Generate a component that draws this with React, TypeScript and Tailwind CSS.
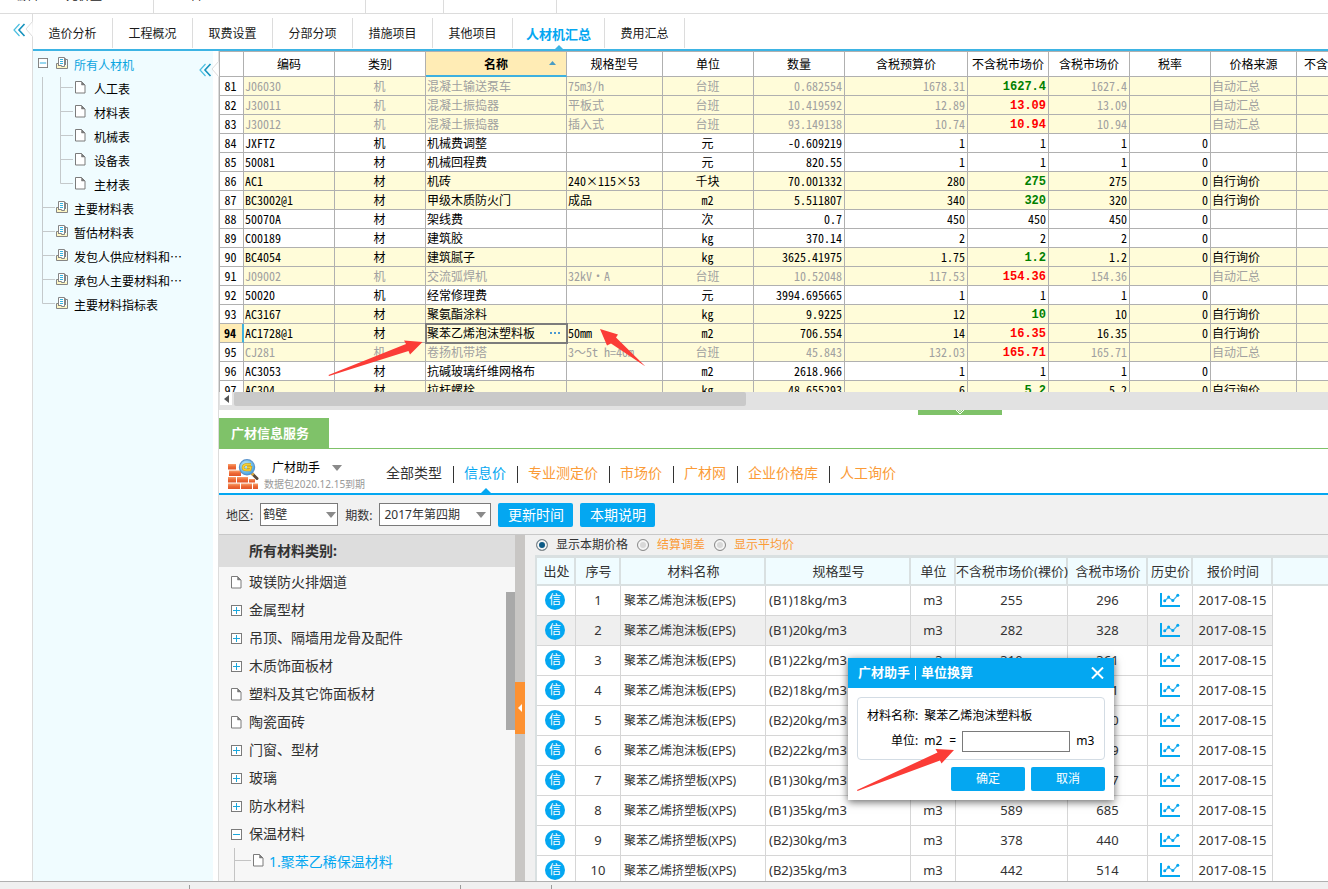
import { useState } from 'react'
import clsx from 'clsx'

const topTabs = ['造价分析', '工程概况', '取费设置', '分部分项', '措施项目', '其他项目', '人材机汇总', '费用汇总']

const sheets = ['人工表', '材料表', '机械表', '设备表', '主材表']
const reports = ['主要材料表', '暂估材料表', '发包人供应材料和⋯', '承包人主要材料和⋯', '主要材料指标表']

type Tone = 'up' | 'down' | ''

interface Item {
  no: number
  code: string
  kind: string
  name: string
  spec: string
  unit: string
  qty: string
  budget: string
  price: string
  tone: Tone
  market: string
  source: '' | '自动汇总' | '自行询价'
}

const row = (
  no: number, code: string, kind: string, name: string, spec: string, unit: string,
  qty: string, budget: string, price: string, tone: Tone, market: string, source: Item['source'],
): Item => ({ no, code, kind, name, spec, unit, qty, budget, price, tone, market, source })

const items: Item[] = [
  row(81, 'J06030', '机', '混凝土输送泵车', '75m3/h', '台班', '0.682554', '1678.31', '1627.4', 'down', '1627.4', '自动汇总'),
  row(82, 'J30011', '机', '混凝土振捣器', '平板式', '台班', '10.419592', '12.89', '13.09', 'up', '13.09', '自动汇总'),
  row(83, 'J30012', '机', '混凝土振捣器', '插入式', '台班', '93.149138', '10.74', '10.94', 'up', '10.94', '自动汇总'),
  row(84, 'JXFTZ', '机', '机械费调整', '', '元', '-0.609219', '1', '1', '', '1', ''),
  row(85, '50081', '材', '机械回程费', '', '元', '820.55', '1', '1', '', '1', ''),
  row(86, 'AC1', '材', '机砖', '240×115×53', '千块', '70.001332', '280', '275', 'down', '275', '自行询价'),
  row(87, 'BC3002@1', '材', '甲级木质防火门', '成品', 'm2', '5.511807', '340', '320', 'down', '320', '自行询价'),
  row(88, '50070A', '材', '架线费', '', '次', '0.7', '450', '450', '', '450', ''),
  row(89, 'C00189', '材', '建筑胶', '', 'kg', '370.14', '2', '2', '', '2', ''),
  row(90, 'BC4054', '材', '建筑腻子', '', 'kg', '3625.41975', '1.75', '1.2', 'down', '1.2', '自行询价'),
  row(91, 'J09002', '机', '交流弧焊机', '32kV·A', '台班', '10.52048', '117.53', '154.36', 'up', '154.36', '自动汇总'),
  row(92, '50020', '机', '经常修理费', '', '元', '3994.695665', '1', '1', '', '1', ''),
  row(93, 'AC3167', '材', '聚氨酯涂料', '', 'kg', '9.9225', '12', '10', 'down', '10', '自行询价'),
  row(94, 'AC1728@1', '材', '聚苯乙烯泡沫塑料板', '50mm', 'm2', '706.554', '14', '16.35', 'up', '16.35', '自行询价'),
  row(95, 'CJ281', '机', '卷扬机带塔', '3～5t h=40m', '台班', '45.843', '132.03', '165.71', 'up', '165.71', '自动汇总'),
  row(96, 'AC3053', '材', '抗碱玻璃纤维网格布', '', 'm2', '2618.966', '1', '1', '', '1', ''),
  row(97, 'AC304', '材', '拉杆螺栓', '', 'kg', '48.655293', '6', '5.2', 'down', '5.2', '自行询价'),
]

const sources = ['全部类型', '信息价', '专业测定价', '市场价', '广材网', '企业价格库', '人工询价']

const categories: [string, 'leaf' | 'closed' | 'open'][] = [
  ['玻镁防火排烟道', 'leaf'],
  ['金属型材', 'closed'],
  ['吊顶、隔墙用龙骨及配件', 'closed'],
  ['木质饰面板材', 'closed'],
  ['塑料及其它饰面板材', 'leaf'],
  ['陶瓷面砖', 'leaf'],
  ['门窗、型材', 'closed'],
  ['玻璃', 'closed'],
  ['防水材料', 'closed'],
  ['保温材料', 'open'],
]

const prices = [
  ['聚苯乙烯泡沫板(EPS)', '(B1)18kg/m3', '255', '296'],
  ['聚苯乙烯泡沫板(EPS)', '(B1)20kg/m3', '282', '328'],
  ['聚苯乙烯泡沫板(EPS)', '(B1)22kg/m3', '310', '361'],
  ['聚苯乙烯泡沫板(EPS)', '(B2)18kg/m3', '207', '241'],
  ['聚苯乙烯泡沫板(EPS)', '(B2)20kg/m3', '232', '270'],
  ['聚苯乙烯泡沫板(EPS)', '(B2)22kg/m3', '257', '299'],
  ['聚苯乙烯挤塑板(XPS)', '(B1)30kg/m3', '513', '597'],
  ['聚苯乙烯挤塑板(XPS)', '(B1)35kg/m3', '589', '685'],
  ['聚苯乙烯挤塑板(XPS)', '(B2)30kg/m3', '378', '440'],
  ['聚苯乙烯挤塑板(XPS)', '(B2)35kg/m3', '442', '514'],
]

function Chevrons() {
  return (
    <svg width="13" height="14" viewBox="0 0 13 14" fill="none">
      <path d="M6.5 1 L1 7 L6.5 13" stroke="#4bbfe0" strokeWidth="1.2" />
      <path d="M11.5 1 L6 7 L11.5 13" stroke="#1592bd" strokeWidth="1.6" />
    </svg>
  )
}

// small fold in a vertical divider, pointing left
function Notch() {
  return (
    <svg width="8" height="18" viewBox="0 0 8 18" fill="none">
      <path d="M8 0 V18 H7 Z" fill="#fff" />
      <path d="M7.5 0.5 L1 9 L7.5 17.5 Z" fill="#fff" />
      <path d="M7.5 0 V1.5 L1 9 L7.5 16.5 V18" stroke="#dcdcdc" />
    </svg>
  )
}

function PageIcon() {
  return (
    <svg width="11" height="13" viewBox="0 0 11 13" className="shrink-0">
      <path d="M0.5 0.5 H6.5 L10 4 V12 H0.5 Z" fill="#fff" stroke="#7b7b7b" />
      <path d="M6.5 0.5 V4 H10 Z" fill="#7b7b7b" stroke="#7b7b7b" strokeWidth="0.5" />
    </svg>
  )
}

function BookIcon() {
  return (
    <svg width="13" height="13" viewBox="0 0 13 13" className="shrink-0" fill="none">
      <path d="M0.5 6.5 H2.5 V8.5 H5.5 V9.5 H9.5 V8.5 H11.5 V11.5 H0.5 Z" fill="#fdf6c3" />
      <path d="M2.5 8 V0.5 H8.5 V8" fill="#fff" stroke="#858585" />
      <path d="M8.5 1.5 H9.5 V8 M9.5 2.5 H11.5 V8" stroke="#858585" />
      <path d="M2.5 6.5 H0.5 V11.5 H11.5 V7" stroke="#858585" />
      <path d="M2 8.500 H5.500 V9.500 H8.500 V8" stroke="#858585" />
      <path d="M4 2.5 H7 M4 4.5 H7 M4 6.5 H7" stroke="#35b3e0" />
    </svg>
  )
}

function Toggle({ open = false, size = 11 }: { open?: boolean; size?: number }) {
  return (
    <svg width={size} height={size} viewBox="0 0 11 11" className="shrink-0" fill="none">
      <rect x="0.5" y="0.5" width="10" height="10" fill="#fff" stroke="#7b7b7b" />
      <path d="M2 5.5 H9" stroke="#1ba7dc" />
      {!open && <path d="M5.5 2 V9" stroke="#1ba7dc" />}
    </svg>
  )
}

function Caret() {
  return (
    <svg width="10" height="6" viewBox="0 0 10 6">
      <path d="M0 0 H10 L5 6 Z" fill="#8a8a8a" />
    </svg>
  )
}

function Trend() {
  return (
    <svg width="20" height="14" viewBox="0 0 20 14" fill="none" className="mx-auto block">
      <path d="M1 0 V13 H20" stroke="#04a7f1" strokeWidth="2" />
      <path d="M4.5 8 L8.5 4.5 L13 7.5 L18 2" stroke="#3fb6ee" strokeWidth="1.3" />
      <circle cx="4.7" cy="7.8" r="1.5" fill="#04a7f1" />
      <circle cx="8.6" cy="3.9" r="1.5" fill="#04a7f1" />
      <circle cx="12.8" cy="7.6" r="1.5" fill="#04a7f1" />
      <circle cx="17.8" cy="2.2" r="1.5" fill="#04a7f1" />
    </svg>
  )
}

function Bricks() {
  return (
    <svg width="32" height="32" viewBox="0 0 32 32">
      <defs>
        <linearGradient id="brick" x1="0" y1="0" x2="0" y2="1">
          <stop offset="0" stopColor="#f9a06c" />
          <stop offset="0.5" stopColor="#ee6a35" />
          <stop offset="1" stopColor="#e0552a" />
        </linearGradient>
        <radialGradient id="lens" cx="0.4" cy="0.35" r="0.7">
          <stop offset="0" stopColor="#c4ecfb" />
          <stop offset="1" stopColor="#3fa0de" />
        </radialGradient>
      </defs>
      <g fill="url(#brick)">
        <rect x="1" y="5" width="8" height="5.500" />
        <rect x="2" y="11.500" width="12" height="5.500" />
        <rect x="1" y="18" width="8" height="5.500" />
        <rect x="10" y="18" width="11" height="5.500" />
        <rect x="22" y="20" width="6" height="3.500" />
        <rect x="1" y="24.500" width="12" height="5.500" />
        <rect x="14" y="24.500" width="11" height="5.500" />
        <rect x="26" y="24.500" width="5" height="5.500" />
      </g>
      <path d="M25 14.500 L30 19.500" stroke="#5b4a3c" strokeWidth="3" strokeLinecap="round" />
      <path d="M24 13.500 L26.500 16" stroke="#e0b040" strokeWidth="2.500" />
      <circle cx="20" cy="8.300" r="7.600" fill="url(#lens)" stroke="#5a93cc" strokeWidth="1.200" />
      <path d="M24 5.500 H19 Q16 6 16 9 Q16.500 11 19.500 11 H23 L23.700 8.300 H20" fill="none" stroke="#c99a14" strokeWidth="2.600" />
      <path d="M24 5.500 H19 Q16 6 16 9 Q16.500 11 19.500 11 H23 L23.700 8.300 H20" fill="none" stroke="#f8d030" strokeWidth="1.400" />
    </svg>
  )
}

function MaterialTree() {
  return (
    <aside className="relative flex w-[186px] shrink-0 border-r border-[#dcdcdc]">
      <ul className="w-[180px] bg-[#f0fcff] pt-[2px] font-['Noto_Sans_CJK_SC',sans-serif] text-xs text-black">
        <li className="flex h-6 items-center text-[#0aa5df]">
          <span className="-mt-1 ml-[5px] mr-2"><Toggle open size={10} /></span>
          <span className="-mt-1"><BookIcon /></span>
          <span className="ml-[5px]">所有人材机</span>
        </li>
        {sheets.map((name, i) => (
          <li key={name} className="flex h-6 items-center">
            <svg width="42" height="24" className="shrink-0" stroke="#c4c9cb" fill="none">
              <path d="M9.5 0 V24 M27.5 10.5 H40" />
              <path d={i === sheets.length - 1 ? 'M27.5 0 V10.5' : 'M27.5 0 V24'} />
            </svg>
            <span className="-mt-1"><PageIcon /></span>
            <span className="ml-2">{name}</span>
          </li>
        ))}
        {reports.map((name, i) => (
          <li key={name} className="flex h-6 items-center">
            <svg width="23" height="24" className="shrink-0" stroke="#c4c9cb" fill="none">
              <path d="M9.5 10.5 H22" />
              <path d={i === reports.length - 1 ? 'M9.5 0 V10.5' : 'M9.5 0 V24'} />
            </svg>
            <span className="-mt-1"><BookIcon /></span>
            <span className="ml-[5px]">{name}</span>
          </li>
        ))}
      </ul>
      <button aria-label="收起" className="absolute right-[6px] top-[12px]"><Chevrons /></button>
      <span className="absolute -right-px top-[9px]"><Notch /></span>
    </aside>
  )
}

const headCell = 'h-[26px] border-b border-r border-t border-[#b0b0b0] p-0 font-normal whitespace-nowrap'

function SummaryGrid() {
  const selected = 94
  return (
    <section className="relative flex min-h-0 flex-[359] flex-col overflow-hidden">
      <div className="min-h-0 flex-1 overflow-hidden">
        <table className="w-[1189px] table-fixed border-separate border-spacing-0 font-['Noto_Sans_Mono_CJK_SC','Noto_Sans_CJK_SC',monospace] text-xs leading-[18px] text-black">
          <colgroup>
            <col className="w-[25px]" />
            <col className="w-[91px]" />
            <col className="w-[91px]" />
            <col className="w-[141px]" />
            <col className="w-[96px]" />
            <col className="w-[91px]" />
            <col className="w-[91px]" />
            <col className="w-[123px]" />
            <col className="w-[81px]" />
            <col className="w-[81px]" />
            <col className="w-[81px]" />
            <col className="w-[86px]" />
            <col className="w-[111px]" />
          </colgroup>
          <thead>
            <tr>
              <th className={clsx(headCell, 'border-l')} />
              <th className={headCell}>编码</th>
              <th className={headCell}>类别</th>
              <th className="relative h-[26px] border-b-2 border-r border-t border-[#b0b0b0] border-b-[#3db1e0] bg-[#ffecb5] p-0 font-bold">
                名称
                <svg width="7" height="4" viewBox="0 0 7 4" className="absolute right-[10px] top-[9px]">
                  <path d="M0 4 L3.500 0 L7 4 Z" fill="#4a9cc4" />
                </svg>
              </th>
              <th className={headCell}>规格型号</th>
              <th className={headCell}>单位</th>
              <th className={headCell}>数量</th>
              <th className={headCell}>含税预算价</th>
              <th className={headCell}>不含税市场价</th>
              <th className={headCell}>含税市场价</th>
              <th className={headCell}>税率</th>
              <th className={headCell}>价格来源</th>
              <th className={headCell}>不含税市场价合计</th>
            </tr>
          </thead>
          <tbody>
            {items.map(it => {
              const auto = it.source === '自动汇总'
              const cell = clsx(
                'h-[19px] border-b border-r border-[#b0b0b0] py-0 pl-px pr-[2px] whitespace-nowrap',
                it.source && 'bg-[#fffcd9]',
                auto && 'text-[#a0a0a0]',
              )
              const active = it.no === selected
              return (
                <tr key={it.no}>
                  <td
                    className={clsx(
                      'h-[19px] border-b border-l border-r border-[#b0b0b0] p-0 pr-[2px] text-center',
                      active && 'border-r-2 border-r-[#3db1e0] bg-[#ffecb5] font-bold',
                    )}
                  >
                    {it.no}
                  </td>
                  <td className={cell}>{it.code}</td>
                  <td className={clsx(cell, 'text-center')}>{it.kind}</td>
                  <td className={clsx(cell, active && 'outline-2 -outline-offset-1 outline-[#7c7c7c]')}>
                    <div className="flex items-center justify-between">
                      {it.name}
                      {active && (
                        <button aria-label="更多" className="flex gap-[2px] pr-[4px]">
                          <i className="h-[2px] w-[2px] bg-[#4b9ad2]" />
                          <i className="h-[2px] w-[2px] bg-[#4b9ad2]" />
                          <i className="h-[2px] w-[2px] bg-[#4b9ad2]" />
                        </button>
                      )}
                    </div>
                  </td>
                  <td className={cell}>{it.spec}</td>
                  <td className={clsx(cell, 'text-center')}>{it.unit}</td>
                  <td className={clsx(cell, 'text-right')}>{it.qty}</td>
                  <td className={clsx(cell, 'text-right')}>{it.budget}</td>
                  <td
                    className={clsx(
                      'h-[19px] border-b border-r border-[#b0b0b0] px-[2px] pb-0 text-right',
                      it.source && 'bg-[#fffcd9]',
                      it.tone
                        ? "pt-[2px] font-['Liberation_Mono',monospace] font-bold leading-4"
                        : 'pt-0',
                      it.tone === 'down' && 'text-[#008000]',
                      it.tone === 'up' && 'text-[#ff0000]',
                    )}
                  >
                    {it.price}
                  </td>
                  <td className={clsx(cell, 'text-right')}>{it.market}</td>
                  <td className={clsx(cell, 'text-right')}>{auto ? '' : '0'}</td>
                  <td className={cell}>{it.source}</td>
                  <td className={cell} />
                </tr>
              )
            })}
          </tbody>
        </table>
      </div>

      <div className="flex h-[18px] shrink-0 items-start bg-[#e2e2e2]">
        <button aria-label="向左滚动" className="ml-px flex h-[13px] w-3 items-center justify-center bg-white">
          <svg width="5" height="8" viewBox="0 0 5 8"><path d="M5 0 V8 L0 4 Z" fill="#555" /></svg>
        </button>
        <div className="ml-[2px] h-[14px] w-[512px] rounded-[2px] bg-[#c9c9c9]" />
      </div>

      <svg width="96" height="38" viewBox="0 0 96 38" className="pointer-events-none absolute left-[109px] top-[288px]">
        <path d="M0.500 36 L1 37 L80.500 12 L82 15.500 L94.500 3 L76 1.500 L78 5 Z" fill="#fb3c36" />
      </svg>
      <svg width="48" height="40" viewBox="0 0 48 40" className="pointer-events-none absolute left-[380px] top-[277px]">
        <path d="M1 1 L19 6.500 L17 9.500 L46.500 38.500 L12 15.500 L8 17.500 Z" fill="#fb3c36" />
      </svg>
    </section>
  )
}

function UnitDialog({ onClose }: { onClose: () => void }) {
  return (
    <div
      role="dialog"
      aria-label="单位换算"
      className="absolute left-[313px] top-[123px] w-[266px] bg-white text-xs text-black shadow-[0_2px_8px_rgba(0,0,0,0.6)]"
    >
      <div className="flex h-[30px] items-center justify-between bg-[#04a7f1] pl-[10px] pr-[10px] text-[13px] font-bold text-white">
        <span className="flex items-center gap-[5px]">
          <span>广材助手</span>
          <i className="h-[14px] w-px bg-white" />
          <span>单位换算</span>
        </span>
        <button aria-label="关闭" onClick={onClose}>
          <svg width="13" height="12" viewBox="0 0 13 12" stroke="#fff" strokeWidth="2">
            <path d="M1 0.500 L12 11.500 M12 0.500 L1 11.500" />
          </svg>
        </button>
      </div>
      <div className="mx-[9px] mt-[9px] h-[63px] whitespace-nowrap rounded border border-[#d3dce4] px-[9px] pt-2">
        <div className="flex h-5 items-center gap-[6px]">
          <span>材料名称:</span>
          <span>聚苯乙烯泡沫塑料板</span>
        </div>
        <div className="mt-1 flex h-[22px] items-center">
          <label htmlFor="ratio" className="flex shrink-0 pl-6">
            <span>单位:</span>
            <span className="ml-[6px]">m2</span>
            <span className="ml-[7px]">=</span>
          </label>
          <input id="ratio" className="ml-[6px] h-[21px] w-[108px] shrink-0 border border-[#7a7a7a] bg-white px-1 outline-none" />
          <span className="ml-[6px]">m3</span>
        </div>
      </div>
      <div className="flex justify-end gap-[6px] px-[9px] pb-[9px] pt-[7px] text-white">
        <button className="h-6 w-[74px] rounded-[2px] bg-[#04a7f1]" onClick={onClose}>确定</button>
        <button className="h-6 w-[74px] rounded-[2px] bg-[#04a7f1]" onClick={onClose}>取消</button>
      </div>
      <svg width="100" height="44" viewBox="0 0 100 44" className="pointer-events-none absolute left-[8px] top-[90px]">
        <path d="M1 42 L1.500 43 L84 12.500 L85.500 15.500 L98 2 L79.500 1 L81.500 4.500 Z" fill="#fb3c36" />
      </svg>
    </div>
  )
}

const priceHead = 'h-[28px] border-b-2 border-r-2 border-[#d9e0e1] bg-[#f0fcff] p-0 pl-[2px] text-[13px] font-normal whitespace-nowrap'
const priceCell = 'h-[30px] border-b border-r border-[#d6d6d6] p-0 pb-[2px] text-center'

function PriceTable() {
  const [mode, setMode] = useState('显示本期价格')
  const [open, setOpen] = useState(true)
  return (
    <div className="relative flex min-w-0 flex-1 flex-col">
      <div className="flex h-[20px] shrink-0 items-center pl-px text-xs">
        {['显示本期价格', '结算调差', '显示平均价'].map((name, i) => (
          <label key={name} className={clsx('mr-[9px] flex items-center gap-2', i > 0 && 'text-[#fb9b37]')}>
            <input
              type="radio"
              name="mode"
              checked={mode === name}
              onChange={() => setMode(name)}
              className="h-3 w-3 appearance-none rounded-full border border-[#8a8a8a] bg-[#d8d8d8] shadow-[inset_0_0_0_2px_#f4f4f4] checked:bg-[#0b5a86]"
            />
            {name}
          </label>
        ))}
      </div>
      <div className="min-h-0 flex-1 overflow-hidden border-l-2 border-t-[3px] border-[#d9e0e1] bg-white">
        <div className="flex bg-[linear-gradient(#f0fcff_26px,#d9e0e1_26px,#d9e0e1_28px,#fff_28px)]">
          <table className="w-[736px] shrink-0 table-fixed border-separate border-spacing-0 text-[13px] leading-[20px] text-[#333]">
            <colgroup>
              <col className="w-[39px]" />
              <col className="w-[45px]" />
              <col className="w-[145px]" />
              <col className="w-[145px]" />
              <col className="w-[45px]" />
              <col className="w-[112px]" />
              <col className="w-[80px]" />
              <col className="w-[45px]" />
              <col className="w-[80px]" />
            </colgroup>
            <thead>
              <tr>
                {['出处', '序号', '材料名称', '规格型号', '单位', '不含税市场价(裸价)', '含税市场价', '历史价', '报价时间'].map(h => (
                  <th key={h} className={priceHead}>
                    <div className="flex justify-center">{h}</div>
                  </th>
                ))}
              </tr>
            </thead>
            <tbody>
              {prices.map(([name, spec, bare, taxed], i) => (
                <tr key={i} className={i === 1 ? 'bg-[#efefef]' : 'bg-white'}>
                  <td className="h-[30px] border-b border-r border-[#d6d6d6] p-0 pb-px pr-[2px]">
                    <span className="mx-auto flex h-5 w-5 items-center justify-center rounded-full bg-[#04a7f1] text-xs text-white">信</span>
                  </td>
                  <td className={priceCell}>{i + 1}</td>
                  <td className="h-[30px] border-b border-r border-[#d6d6d6] p-0 pl-[3px] text-xs">{name}</td>
                  <td className="h-[30px] border-b border-r border-[#d6d6d6] p-0 pb-[2px] pl-[3px]">{spec}</td>
                  <td className={priceCell}>m3</td>
                  <td className={priceCell}>{bare}</td>
                  <td className={priceCell}>{taxed}</td>
                  <td className={priceCell}><Trend /></td>
                  <td className={clsx(priceCell, 'whitespace-nowrap')}>2017-08-15</td>
                </tr>
              ))}
            </tbody>
          </table>
        </div>
      </div>
      {open && <UnitDialog onClose={() => setOpen(false)} />}
    </div>
  )
}

function InfoService() {
  return (
    <section className="relative flex min-h-0 flex-[471] flex-col overflow-hidden text-[#333]">
      <div className="flex h-[39px] shrink-0 items-end border-b border-[#7fc269] bg-white">
        <h2 className="flex h-[30px] w-[110px] items-center bg-[#7fc269] pl-3 text-[13px] font-bold text-white">广材信息服务</h2>
      </div>
      <button aria-label="收起面板" className="absolute left-[699px] top-0 flex h-[5px] w-[84px] justify-center bg-[#7fc269]">
        <svg width="10" height="5" viewBox="0 0 10 5" fill="none" stroke="#fff">
          <path d="M1 0 L5 4 L9 0 M3 0 L5 1.500 L7 0" />
        </svg>
      </button>

      <div className="flex h-[46px] shrink-0 items-center border-b-2 border-[#04a7f1] bg-white">
        <span className="ml-2 mt-2"><Bricks /></span>
        <div className="ml-[5px] mt-[7px] w-[112px] whitespace-nowrap">
          <button className="flex h-[18px] items-center gap-3 pl-2 text-xs text-black">
            广材助手
            <Caret />
          </button>
          <p className="text-[10px] leading-[14px] text-[#999]">数据包2020.12.15到期</p>
        </div>
        <nav className="flex h-full items-center text-sm">
          {sources.map((s, i) => (
            <a
              key={s}
              href="#"
              className={clsx(
                'relative flex h-full items-center whitespace-nowrap pl-[10px] pr-[12px] pt-[4px]',
                i === 0 && 'text-[#333]',
                i === 1 && 'text-[#04a7f1]',
                i > 1 && 'text-[#fb9b37]',
              )}
            >
              {s}
              {i < sources.length - 1 && <i className="absolute right-0 top-[17px] h-[17px] w-px bg-[#333]" />}
              {i === 1 && (
                <svg width="10" height="5" viewBox="0 0 10 5" className="absolute bottom-0 left-[27px]">
                  <path d="M0 5 L5 0 L10 5 Z" fill="#04a7f1" />
                </svg>
              )}
            </a>
          ))}
        </nav>
      </div>

      <div className="flex h-10 shrink-0 items-center border-b border-[#c8c8c8] bg-[#f1f1f1] pl-[7px] text-xs">
        <label htmlFor="area" className="pt-[2px]">地区:</label>
        <span className="relative ml-[7px]">
          <select id="area" className="block h-[23px] w-[78px] appearance-none border border-[#7a7a7a] bg-white pl-[2px] outline-none">
            <option>鹤壁</option>
          </select>
          <span className="pointer-events-none absolute right-[2px] top-[9px]"><Caret /></span>
        </span>
        <label htmlFor="period" className="ml-[7px] pt-[2px]">期数:</label>
        <span className="relative ml-[7px]">
          <select id="period" className="block h-[23px] w-[112px] appearance-none border border-[#7a7a7a] bg-white pl-[4px] outline-none">
            <option>2017年第四期</option>
          </select>
          <span className="pointer-events-none absolute right-[5px] top-[9px]"><Caret /></span>
        </span>
        <button className="ml-[7px] h-6 w-[75px] rounded-[2px] bg-[#04a7f1] text-sm text-white">更新时间</button>
        <button className="ml-[7px] h-6 w-[75px] rounded-[2px] bg-[#04a7f1] text-sm text-white">本期说明</button>
      </div>

      <div className="flex min-h-0 flex-1 bg-[#f0f0f0]">
        <div className="relative w-[296px] shrink-0 overflow-hidden bg-[#f7f7f7] text-sm">
          <h3 className="mb-px flex h-8 items-center bg-[#dddddd] pl-[30px] font-bold">所有材料类别:</h3>
          <ul>
            {categories.map(([name, state]) => (
              <li key={name} className="flex h-7 items-center pl-3">
                {state === 'leaf' ? <PageIcon /> : <Toggle open={state === 'open'} />}
                <span className="ml-[7px]">{name}</span>
              </li>
            ))}
            <li className="flex h-9 items-start pl-[15px] text-[#04a7f1]">
              <svg width="19" height="36" className="shrink-0" stroke="#c4c4c4" fill="none">
                <path d="M0.500 0 V36 M0.500 12.500 H17" />
              </svg>
              <span className="mt-[6px]"><PageIcon /></span>
              <a href="#" className="ml-[5px] mt-[4px]">1.聚苯乙稀保温材料</a>
            </li>
          </ul>
          <div className="absolute right-0 top-[57px] h-[138px] w-[9px] bg-[#a9a9a9]" />
        </div>
        <div className="relative mr-[10px] w-[10px] shrink-0 bg-[#c8c6c4]">
          <button aria-label="收起类别" className="absolute left-0 top-[147px] flex h-[52px] w-[10px] items-center justify-center bg-[#fd9131]">
            <svg width="4" height="8" viewBox="0 0 4 8"><path d="M4 0 V8 L0 4 Z" fill="#fff" /></svg>
          </button>
        </div>
        <PriceTable />
      </div>
    </section>
  )
}

export default function App() {
  const [tab, setTab] = useState('人材机汇总')
  return (
    <div
      lang="zh-CN"
      className="flex h-screen flex-col overflow-hidden bg-white font-['Noto_Sans','Noto_Sans_CJK_SC',sans-serif] text-xs leading-[18px] text-[#1a1a1a]"
    >
      {/* lower edge of the ribbon */}
      <div className="flex h-[14px] shrink-0 items-end overflow-hidden border-b border-[#dcdcdc]">
        <div className="flex h-full w-[154px] gap-7 border-r border-[#dcdcdc] pl-[14px]">
          <span className="-mt-[13px]">编辑</span>
          <span className="-mt-[13px]">元价量</span>
        </div>
        <div className="flex h-full w-[212px] border-r border-[#dcdcdc] pl-6">
          <span className="-mt-[13px]">工料</span>
        </div>
        <div className="h-full w-[78px] border-r border-[#dcdcdc]" />
        <div className="h-full w-[113px] border-r border-[#dcdcdc]" />
      </div>

      <div className="flex min-h-0 flex-1">
        <div className="relative w-[33px] shrink-0 border-r border-[#dcdcdc]">
          <button aria-label="收起导航" className="absolute left-[13px] top-[9px]"><Chevrons /></button>
          <span className="absolute -right-px top-[6px]"><Notch /></span>
        </div>
        <div className="flex min-w-0 flex-1 flex-col">
          <nav className="flex h-[37px] shrink-0 items-end border-b-2 border-[#3db4e4]">
            {topTabs.map(t => (
              <button
                key={t}
                onClick={() => setTab(t)}
                className={clsx(
                  'relative mb-px h-[30px] border-r border-[#dcdcdc] pt-[2px]',
                  t === tab ? 'w-[92px] text-[13px] font-bold text-[#04a7f1]' : 'w-20',
                )}
              >
                {t}
                {t === tab && (
                  <svg width="8" height="4" viewBox="0 0 8 4" className="absolute -bottom-px left-[42px]">
                    <path d="M0 4 L4 0 L8 4 Z" fill="#3db4e4" />
                  </svg>
                )}
              </button>
            ))}
          </nav>
          <div className="flex min-h-0 flex-1">
            <MaterialTree />
            <main className="flex min-w-0 flex-1 flex-col">
              <SummaryGrid />
              <InfoService />
            </main>
          </div>
        </div>
      </div>

      <footer className="flex h-2 shrink-0 items-end border-t border-[#b0b0b0] bg-[#f0f0f0]">
        <i className="h-1 w-[190px] border-r border-[#9a9a9a]" />
        <i className="h-1 w-[271px] border-r border-[#9a9a9a]" />
        <i className="h-1 w-[91px] border-r border-[#9a9a9a]" />
      </footer>
    </div>
  )
}
